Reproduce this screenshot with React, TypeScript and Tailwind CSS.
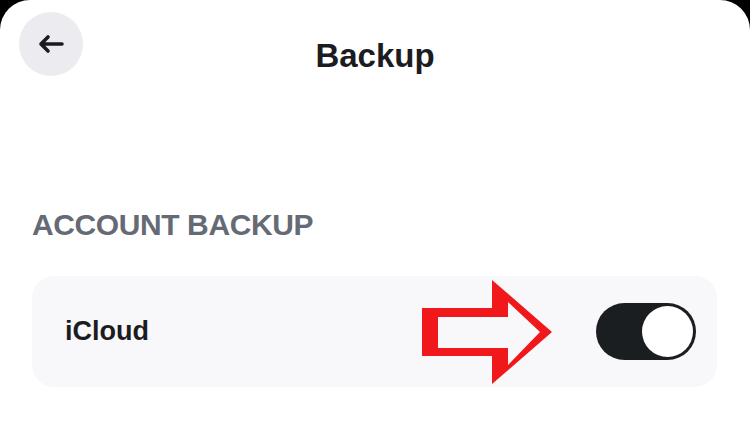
import React from "react";

export default function App() {
  return (
    <div className="w-[750px] h-[442px] bg-black overflow-hidden" style={{ fontFamily: '"Liberation Sans", Arial, sans-serif' }}>
      <div className="relative w-[750px] h-[442px] bg-white rounded-t-[30px]">
        <div className="grid grid-cols-[1fr_auto_1fr] items-start">
          <div className="pl-[19px] pt-[12px]">
            <button className="w-[64px] h-[64px] rounded-full bg-[#ececf0] flex items-center justify-center">
              <svg width="28" height="20" viewBox="0 0 28 20" fill="none">
                <path d="M25 10H4M11 3L4 10L11 17" stroke="#1b1c1f" strokeWidth="3.6" strokeLinecap="round" strokeLinejoin="round" />
              </svg>
            </button>
          </div>
          <h1 className="mt-[39px] text-[33px] leading-[33px] font-bold text-[#1b1c1f]">Backup</h1>
          <div />
        </div>

        <div className="mt-[134px] pl-[32px] text-[30px] leading-[30px] font-bold tracking-[-0.4px] text-[#656b74]">
          ACCOUNT BACKUP
        </div>

        <div className="mt-[36px] mx-[32px] w-[685px] h-[111px] rounded-[22px] bg-[#f8f8fa] flex items-center justify-between pl-[33px] pr-[21px]">
          <span className="text-[27px] leading-[27px] font-bold text-[#1b1c1f]">iCloud</span>
          <div className="w-[100px] h-[57px] rounded-full bg-[#1b1e21] flex items-center justify-end pr-[3px]">
            <div className="w-[51px] h-[51px] rounded-full bg-white" />
          </div>
        </div>

        <svg className="absolute left-0 top-0 pointer-events-none" width="750" height="442" viewBox="0 0 750 442">
          <path
            fillRule="evenodd"
            fill="#f0181b"
            d="M422 308H492V280L552 332L492 384V356H422Z M438 317V348H508V365L540 332L508 302V317Z"
          />
        </svg>
      </div>
    </div>
  );
}
